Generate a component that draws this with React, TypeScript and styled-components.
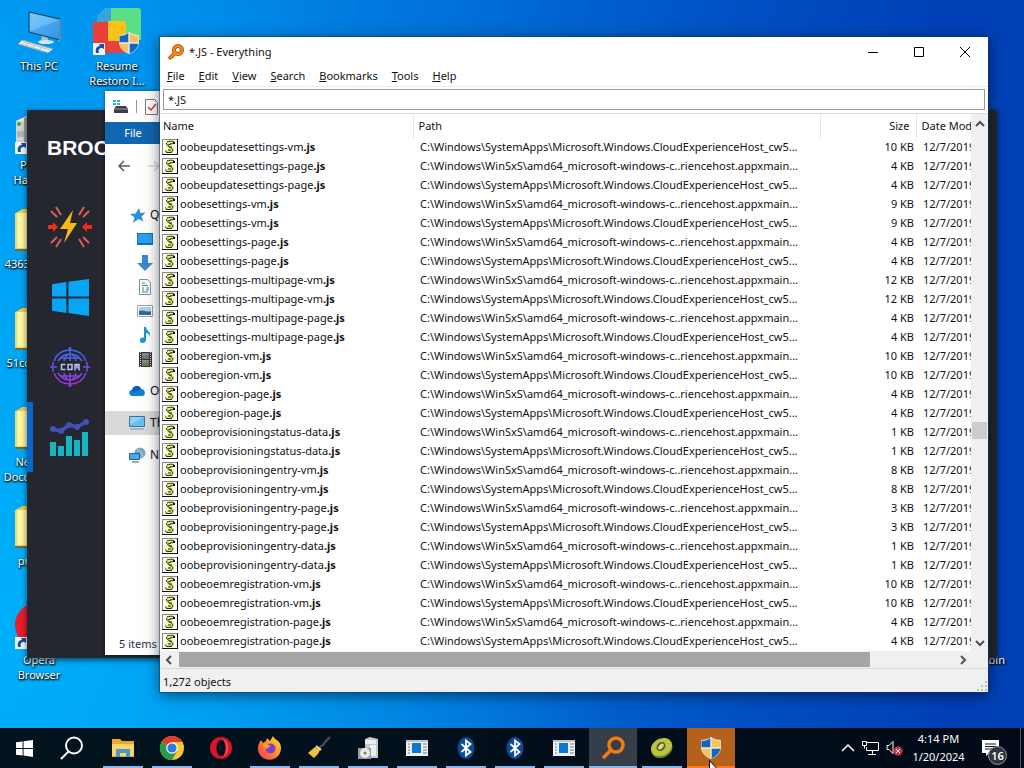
import React from "react";
import styled, { createGlobalStyle } from "styled-components";

const ui = `"Noto Sans", "Open Sans", sans-serif`;

const GlobalStyle = createGlobalStyle`
  *, *::before, *::after { box-sizing: border-box; }
  body { margin: 0; font: 11px/16px ${ui}; color: #111; }
  button, input { font: inherit; color: inherit; border: 0; padding: 0; background: none; }
  ul { list-style: none; margin: 0; padding: 0; }
  svg { display: block; flex: none; }
`;

const Screen = styled.div`
  display: flex;
  flex-direction: column;
  min-height: 100vh;
  overflow: hidden;
`;

const Desktop = styled.main`
  position: relative;
  flex: 1;
  overflow: hidden;
  background:
    radial-gradient(ellipse 60% 100% at 0% 85%, rgba(0, 186, 255, 0.7), rgba(0, 186, 255, 0) 100%),
    linear-gradient(90deg, #0096f0 0%, #008ae8 20%, #0070d8 45%, #0052c4 70%, #0040b6 92%);
`;

const IconGrid = styled.ul`
  display: grid;
  grid-auto-flow: column;
  grid-template-rows: repeat(7, 99px);
  grid-auto-columns: 78px;
`;

const Shortcut = styled.li`
  display: flex;
  flex-direction: column;
  align-items: center;
  padding-top: 7px;
  gap: 3px;
  line-height: 15px;
  color: #fff;
  text-align: center;
  white-space: pre-line;
  text-shadow: 1px 1px 2px #000, 0 1px 2px #000;
`;

const BinLabel = styled.span`
  position: absolute;
  right: 19px;
  bottom: 61px;
  line-height: 15px;
  color: #fff;
  text-shadow: 1px 1px 2px #000, 0 1px 2px #000;
`;

const DarkWindow = styled.section`
  position: absolute;
  left: 27px;
  right: 27px;
  top: 110px;
  bottom: 70px;
  background: #242630;
  box-shadow: 0 2px 6px rgba(0, 0, 0, 0.6);
`;

const Brand = styled.h1`
  margin: 0;
  padding: 25px 0 0 20px;
  font: bold 21px/26px "Liberation Sans", Arial, sans-serif;
  color: #fff;
`;

const DarkNav = styled.nav`
  display: flex;
  flex-direction: column;
  align-items: flex-start;
  padding-top: 31px;
`;

const DarkItem = styled.button<{ $active?: boolean }>`
  display: flex;
  align-items: center;
  justify-content: center;
  width: 78px;
  height: 70px;
  padding-left: ${(p) => (p.$active ? 2 : 8)}px;
  border-left: ${(p) => (p.$active ? "6px solid #0a66cf" : "0")};
`;

const Explorer = styled.section`
  position: absolute;
  left: 105px;
  right: 45px;
  top: 91px;
  bottom: 73px;
  display: flex;
  flex-direction: column;
  align-items: flex-start;
  background: #fff;
  box-shadow: 0 0 3px rgba(0, 0, 0, 0.5);
`;

const QuickBar = styled.header`
  display: flex;
  align-items: center;
  gap: 8px;
  height: 31px;
  padding-left: 8px;
`;

const Separator = styled.span`
  width: 1px;
  height: 13px;
  background: #999;
`;

const FileTab = styled.button`
  width: 56px;
  height: 22px;
  background: #1166b0;
  color: #fff;
`;

const NavArrows = styled.div`
  display: flex;
  gap: 16px;
  padding: 14px 12px 0;
`;

const Tree = styled.ul`
  flex: 1;
  width: 55px;
  padding-top: 29px;
  overflow: hidden;
  white-space: nowrap;
`;

const TreeItem = styled.li<{ $sub?: boolean; $gap?: boolean; $selected?: boolean }>`
  display: flex;
  align-items: center;
  gap: 4px;
  height: 24px;
  margin-top: ${(p) => (p.$gap ? 8 : 0)}px;
  padding-left: ${(p) => (p.$sub ? 32 : 24)}px;
  background: ${(p) => (p.$selected ? "#d9d9d9" : "transparent")};
  font-size: 12px;
`;

const ExplorerStatus = styled.footer`
  padding: 0 14px 3px;
  color: #26344f;
`;

const Window = styled.section`
  position: absolute;
  left: 160px;
  right: 36px;
  top: 37px;
  display: flex;
  flex-direction: column;
  background: #fff;
  box-shadow: 0 0 0 1px rgba(20, 60, 100, 0.5), 0 3px 14px rgba(0, 0, 0, 0.55);
`;

const TitleBar = styled.header`
  display: flex;
  align-items: center;
  height: 29px;
  padding-left: 8px;
  gap: 5px;
`;

const Title = styled.h2`
  flex: 1;
  margin: 0;
  font: inherit;
`;

const Captions = styled.div`
  display: flex;
`;

const Caption = styled.button`
  display: grid;
  place-items: center;
  width: 46px;
  height: 29px;
`;

const MenuBar = styled.nav`
  display: flex;
  height: 21px;
  padding-left: 7px;
  gap: 14px;
  border-bottom: 1px solid #ececec;
`;

const MenuItem = styled.button`
  line-height: 20px;
  &::first-letter { text-decoration: underline; }
`;

const SearchRow = styled.div`
  padding: 2px 3px 3px;
  border-bottom: 1px solid #dcdcdc;
`;

const SearchBox = styled.input`
  display: block;
  width: 100%;
  height: 21px;
  padding: 0 4px;
  border: 1px solid #9a9a9a;
  background: #fff;
`;

const ListArea = styled.div`
  display: grid;
  grid-template-columns: minmax(0, 1fr) 17px;
`;

const FileTable = styled.table`
  width: 100%;
  table-layout: fixed;
  border-collapse: collapse;
  line-height: 17px;
`;

const NameCol = styled.col`
  width: 253px;
`;

const SizeCol = styled.col`
  width: 96px;
`;

const DateCol = styled.col`
  width: 55px;
`;

const Head = styled.th<{ $right?: boolean }>`
  height: 24px;
  padding: 0 6px 2px ${(p) => (p.$right ? 0 : 5)}px;
  border-right: 1px solid #e5e5e5;
  font-weight: 400;
  text-align: ${(p) => (p.$right ? "right" : "left")};
  white-space: nowrap;
  overflow: hidden;
  &:first-child { padding-left: 3px; }
  &:last-child { border-right: 0; padding-right: 0; }
`;

const Cell = styled.td<{ $right?: boolean }>`
  height: 19px;
  padding: 0 2px 2px ${(p) => (p.$right ? 0 : 7)}px;
  text-align: ${(p) => (p.$right ? "right" : "left")};
  white-space: nowrap;
  overflow: hidden;
  &:first-child { padding-left: 2px; }
  &:last-child { padding-right: 0; }
`;

const FileName = styled.span`
  display: flex;
  align-items: flex-end;
  gap: 2px;
`;

const VScroll = styled.div`
  display: grid;
  grid-template-rows: 20px 290fr 17px 198fr 16px;
  justify-items: center;
  align-items: center;
  background: #f0f0f0;
`;

const VThumb = styled.div`
  grid-row: 3;
  width: 15px;
  height: 17px;
  background: #cdcdcd;
`;

const HScroll = styled.div`
  display: grid;
  grid-template-columns: 19px 691fr 85fr 16px 17px;
  align-items: center;
  justify-items: center;
  height: 17px;
  background: #f0f0f0;
`;

const HThumb = styled.div`
  width: 100%;
  height: 15px;
  background: #a6a6a6;
`;

const ScrollButton = styled.button`
  display: grid;
  place-items: center;
`;

const StatusBar = styled.footer`
  display: flex;
  justify-content: space-between;
  align-items: flex-end;
  height: 24px;
  padding: 0 1px 1px 3px;
  border-top: 1px solid #dadada;
  background: #f0f0f0;
  line-height: 18px;
`;

const Taskbar = styled.footer`
  display: flex;
  height: 40px;
  background: linear-gradient(90deg, #02141e, #020a18);
  color: #fff;
`;

const SystemButtons = styled.div`
  display: flex;
  margin-right: 3px;
`;

const TaskButtons = styled.div`
  display: flex;
  gap: 1px;
`;

const TaskButton = styled.button<{ $tone?: "active" | "alert"; $open?: boolean }>`
  display: grid;
  place-items: center;
  position: relative;
  width: 48px;
  background: ${(p) => (p.$tone === "active" ? "#363f49" : p.$tone === "alert" ? "#b5611b" : "transparent")};
  &::after {
    content: "";
    position: absolute;
    bottom: 0;
    height: 2px;
    width: ${(p) => (p.$tone ? 48 : 40)}px;
    background: ${(p) => (p.$tone === "alert" ? "#ff7a1c" : p.$open ? "#86b9ea" : "transparent")};
  }
`;

const Tray = styled.div`
  display: flex;
  align-items: center;
  margin-left: auto;
  gap: 7px;
  padding-right: 3px;
`;

const Clock = styled.time`
  width: 57px;
  line-height: 18px;
  text-align: center;
`;

const Notices = styled.button`
  position: relative;
  width: 28px;
  height: 18px;
  margin-left: 8px;
`;

const Badge = styled.span`
  position: absolute;
  left: 6px;
  top: 7px;
  width: 19px;
  height: 19px;
  border: 1px solid #8a9097;
  border-radius: 50%;
  background: #30363e;
  font-weight: 600;
  line-height: 17px;
  text-align: center;
`;

const Peek = styled.span`
  width: 1px;
  height: 40px;
  margin-left: 3px;
  background: #4a525c;
`;

const Pointer = styled.svg`
  position: absolute;
  left: 22px;
  top: 32px;
  z-index: 1;
`;

const ShieldIcon = ({ size }: { size: number }) => (
  <svg width={size} height={size} viewBox="0 0 22 22">
    <path d="M11 0C8 2 5 3 1 3v7c0 6 5 10 10 12 5-2 10-6 10-12V3c-4 0-7-1-10-3z" fill="#e8edf2" />
    <path d="M10.300 1C8 3 5 3.800 1.500 3.800V10.300h8.800z" fill="#1565bb" />
    <path d="M11.700 1C14 3 17 3.800 20.500 3.800V10.300h-8.800z" fill="#f9c15c" />
    <path d="M1.700 11.700c.7 4.500 4.500 7.800 8.600 9.600v-9.600z" fill="#f9c15c" />
    <path d="M20.300 11.700c-.7 4.500-4.500 7.800-8.600 9.600v-9.600z" fill="#1565bb" />
  </svg>
);

const ShortcutArrow = () => (
  <g>
    <path d="M0 36h12v12H0z" fill="#f4f7fa" />
    <path d="M3 46c-1-5 1-7 4-7l-1-2h5v5l-2-1c-3 0-4 2-3 5z" fill="#1c4f9f" />
  </g>
);

const PcIcon = () => (
  <svg width="48" height="48" viewBox="0 0 48 48">
    <defs>
      <linearGradient id="pcScreen" x1="0" y1="0" x2="1" y2="1">
        <stop offset="0" stopColor="#64bdf6" />
        <stop offset="1" stopColor="#2c93e6" />
      </linearGradient>
    </defs>
    <path d="M14 5l31 7v21l-31-8z" fill="url(#pcScreen)" stroke="#183a5c" strokeWidth="1" />
    <path d="M15 6l29 7-29 11z" fill="#8fd1fa" opacity=".45" />
    <path d="M45 12v21l-2 .5" stroke="#9ac" fill="none" />
    <path d="M27 29l6 2v3h-7z" fill="#a9bcc9" />
    <ellipse cx="31" cy="35" rx="8" ry="2" fill="#dae5ec" />
    <path d="M7 33l31 9-5 4-30-9z" fill="#eff4f7" stroke="#8ea4b2" />
    <path d="M8 35l27 8M6 37l26 8M14 35l-4 4M21 37l-4 4M28 39l-4 4" stroke="#adbdc8" />
  </svg>
);

const RestoroIcon = () => (
  <svg width="48" height="48" viewBox="0 0 48 48">
    <path d="M4 9l9-8h32q3 0 3 3v29H4z" fill="#5adf86" />
    <path d="M4 9l9-8h5v14H4z" fill="#38a4dd" />
    <path d="M0 15h17v31H4q-4 0-4-4z" fill="#ea3f39" />
    <path d="M15 14h15q3 0 3 3v17H15z" fill="#fcc21b" />
    <path d="M15 34h16v12H15z" fill="#e8423d" />
    <ShortcutArrow />
    <g transform="translate(25 25)"><ShieldIcon size={22} /></g>
  </svg>
);

const PcToolIcon = () => (
  <svg width="48" height="48" viewBox="0 0 48 48">
    <path d="M1 15l11-5h20v36H1z" fill="#d4d4d4" />
    <path d="M1 15l11-5v5z" fill="#eee" />
    <path d="M9 12l3-1v34H9z" fill="#999" />
    <circle cx="4" cy="18" r="2" fill="#4ba52d" />
    <path d="M2 25h7v6H2z" fill="#b4b4b4" />
    <ShortcutArrow />
  </svg>
);

const FolderIcon = () => (
  <svg width="48" height="48" viewBox="0 0 48 48">
    <path d="M1 8l7-4h18v41H1z" fill="#fdf6a2" />
    <path d="M1 8l7-4h16v4z" fill="#f2c849" />
    <path d="M1 8v36h15" fill="none" stroke="#e9d680" strokeWidth="2" />
    <path d="M0 44h26v2H0z" fill="#7c6b2a" />
  </svg>
);

const OperaDesktopIcon = () => (
  <svg width="48" height="48" viewBox="0 0 48 48">
    <ellipse cx="24" cy="24" rx="24" ry="23" fill="#e81c2b" />
    <ellipse cx="24" cy="24" rx="10" ry="17" fill="#fff" />
    <ShortcutArrow />
  </svg>
);

const KeyIcon = () => (
  <svg width="16" height="16" viewBox="0 0 24 24" fill="none" strokeLinecap="round">
    <circle cx="15" cy="9" r="6" stroke="#a84a08" strokeWidth="6" />
    <path d="M10 14L3.500 20.500" stroke="#a84a08" strokeWidth="6" />
    <circle cx="15" cy="9" r="6" stroke="#f58a1c" strokeWidth="3.500" />
    <path d="M10 14L3.500 20.500" stroke="#f58a1c" strokeWidth="3.500" />
  </svg>
);

const ScriptIcon = () => (
  <svg width="16" height="16" viewBox="0 0 16 16" shapeRendering="crispEdges">
    <path d="M0 0h16v16H0z" fill="#8c8c80" />
    <path d="M1 1h14v14H1z" fill="#fbfbf3" />
    <path d="M15 0h1v16H0v-1h15z" fill="#111" />
    <g shapeRendering="auto">
      <path d="M5 2h7l1 2-3 1-1 2 3 2v3l-2 2H4l-1-2 2-1 2-1-2-2-1-3z" fill="#e3ea7c" />
      <path d="M5 3c2-1 5-1 7-.500M12.500 3l-2 2-2-.500M4.500 4c0 3 4 4 6 6 1 2-1 3.500-3 3.500M3.500 11.500l1 2h5M6 6l3-1M7 8l3 0M6 11h3" fill="none" stroke="#242c12" strokeWidth="1" />
      <path d="M11 3h2v2h-2z" fill="#111" />
    </g>
  </svg>
);

const BoltIcon = () => (
  <svg width="44" height="42" viewBox="0 0 44 42">
    <path d="M25 4L12 23h8l-4 14 13-20h-7z" fill="#fdb813" />
    <path d="M0 19h5v-3l5 5-5 5v-3H0zM44 19h-5v-3l-5 5 5 5v-3h5z" fill="#f02d12" />
    <path d="M8 1l5 8M3 5l6 6M36 1l-5 8M41 5l-6 6M8 41l5-8M3 37l6-6M36 41l-5-8M41 37l-6-6" stroke="#dc5f57" strokeWidth="2" />
  </svg>
);

const FlagIcon = ({ size, color }: { size: number; color: string }) => (
  <svg width={size} height={size} viewBox="0 0 36 36" fill={color}>
    <path d="M0 5l14-2v14H0zM16 2.600L36 0v17H16zM0 19h14v14L0 31zM16 19h20v17l-20-3z" />
  </svg>
);

const ComIcon = () => (
  <svg width="40" height="40" viewBox="0 0 40 40" fill="none">
    <defs>
      <linearGradient id="com" x2="0" y2="1">
        <stop stopColor="#3d6bea" />
        <stop offset="1" stopColor="#9a35d8" />
      </linearGradient>
    </defs>
    <g stroke="url(#com)" strokeWidth="1.500">
      <path d="M4 14C7 6 13 3 20 3s13 3 16 11M4 26c3 8 9 11 16 11s13-3 16-11" />
      <path d="M8 14c3-5 7-7 12-7s9 2 12 7M8 26c3 5 7 7 12 7s9-2 12-7M14 14c1-4 3-7 6-7s5 3 6 7M14 26c1 4 3 7 6 7s5-3 6-7" />
      <path d="M20.010 0v14M20 26v14M0 20.010h7M33 20h7M3 15v10M37 15v10M10 11h20M10 29h20" />
    </g>
    <circle cx="20" cy="1.500" r="1.500" fill="#3d6bea" />
    <circle cx="20" cy="38.500" r="1.500" fill="#9a35d8" />
    <path d="M15.500 17.500h-4v5h4M18 17.500h4v5h-4zM25 23.500v-6h4v6M27 17.500v4" stroke="#b9c2f5" strokeWidth="1.500" />
  </svg>
);

const ChartIcon = () => (
  <svg width="40" height="37" viewBox="0 3 40 37">
    <path d="M0 26h6v14H0zM8 30h6v10H8zM16 20h6v20h-6zM24 24h6v16h-6zM32 16h6v24h-6z" fill="#1ab4bf" />
    <path d="M2 13l9 2 8-6 8 2 9-5" fill="none" stroke="#4351b5" strokeWidth="3.500" />
    <g fill="#4351b5"><circle cx="3" cy="13" r="3" /><circle cx="11" cy="15" r="3" /><circle cx="19" cy="9" r="3" /><circle cx="27" cy="11" r="3" /><circle cx="36" cy="6" r="3" /></g>
  </svg>
);

const treeArt: Record<string, React.ReactNode> = {
  star: <path d="M10 1l1.500 5 5-.5-4 4 2 5L9.500 12 4 16l1.500-5.500L1 7l5.500-.5z" fill="#2f8fdc" />,
  desktop: <><path d="M0 2h16v12H0z" fill="#1773bd" /><path d="M1 3h14v9H1z" fill="#29a0ee" /></>,
  down: <path d="M5 0h6v8h5l-8 8-8-8h5z" fill="#3c87d2" />,
  doc: <><path d="M2.500.5h8l3 3v12h-11z" fill="#fff" stroke="#848e96" /><path d="M5 4h3M5 6.500h6M5 9h2M9 9h3M5 11h2M9 11h3M5 13h6" stroke="#3b85ab" /></>,
  picture: <><path d="M.5 2.500h15v11H.5z" fill="#fff" stroke="#9ba3a9" /><path d="M2 4h12v8H2z" fill="#a8d3ef" /><path d="M2 8c5-2 7 2 12 0v4H2z" fill="#3c6785" /></>,
  music: <path d="M7 0h2c0 4 5 4 4 9-1-2-2-3-4-3v7c0 4-7 4-6 0 0-2 2-3 4-2z" fill="#1c92e0" />,
  film: <><path d="M2 1h13v15H2z" fill="#333" /><path d="M5 2h7v6H5zM5 9h7v6H5z" fill="#7589c2" /><path d="M5 5l7-1v4H5zM5 12l7-1v4H5z" fill="#75803b" /><path d="M3.500 1v15M13.500 1v15" stroke="#ddd" strokeDasharray="1 1" /></>,
  cloud: <><path d="M4 13c-5 0-5-6-1-6 1-5 8-5 9-1 5 0 5 7 1 7z" fill="#1280d8" /><path d="M3 7c1-5 8-5 9-1L5 9z" fill="#0a5eb4" /></>,
  pc: <><path d="M.5 1.500h15v10H.5z" fill="#67bef3" stroke="#3b7296" /><path d="M1 2h14L1 10z" fill="#8dd0f6" /><path d="M1 14h14" stroke="#7297ad" /></>,
  network: <><circle cx="11" cy="6" r="5.500" fill="#79a9c7" /><path d="M8 2c3 2 5 5 6 8" stroke="#b8d5e6" fill="none" /><path d="M.5 6.500h10v6H.5z" fill="#4aa9ea" stroke="#236394" /><path d="M3 15h7" stroke="#557" /></>,
};

const TreeIcon = ({ name }: { name: string }) => (
  <svg width="17" height="17" viewBox="0 0 17 17">{treeArt[name]}</svg>
);

const Chevron = ({ d }: { d: string }) => (
  <svg width="10" height="10" viewBox="0 0 10 10" fill="none" stroke="#505050" strokeWidth="2"><path d={d} /></svg>
);

const WinIcon = () => (
  <svg width="22" height="16" viewBox="0 0 22 16">
    <path d="M0 0h22v16H0z" fill="#eef2f4" /><path d="M6 3h9v10H6z" fill="#0c78d4" />
    <path d="M2 4h2M2 7h2M2 10h2M2 13h2M17 4h4M17 7h4M17 10h4M17 13h4" stroke="#6f7c85" /><path d="M0 1h22" stroke="#8c989f" />
  </svg>
);

const BluetoothIcon = () => (
  <svg width="18" height="22" viewBox="0 0 18 22">
    <ellipse cx="9" cy="11" rx="8.500" ry="11" fill="#0a4c94" />
    <path d="M4.500 7l9 8L9 18.500v-15L13.500 7l-9 8" fill="none" stroke="#fff" strokeWidth="1.800" />
  </svg>
);

const taskArt: Record<string, React.ReactNode> = {
  search: <svg width="24" height="24" viewBox="0 0 24 24" fill="none" stroke="#fff" strokeWidth="2"><circle cx="14" cy="9.500" r="8" /><path d="M8.500 15.500L1 23" /></svg>,
  folder: <svg width="22" height="20" viewBox="0 0 22 20"><path d="M0 1h8l2 2h12v16H0z" fill="#e9a832" /><path d="M0 6h22v12H0z" fill="#fbd667" /><path d="M4 11h14v8h-4v-4H8v4H4z" fill="#4797cf" /></svg>,
  chrome: <svg width="24" height="24" viewBox="0 0 24 24"><circle cx="12" cy="12" r="12" fill="#fbc82e" /><path d="M12 12L1.600 6A12 12 0 0 1 22.400 6H12z" fill="#e23b2e" /><path d="M12 12L1.600 6A12 12 0 0 0 12 24l5-9z" fill="#289b4b" /><circle cx="12" cy="12" r="5.800" fill="#fff" /><circle cx="12" cy="12" r="4.600" fill="#3177e0" /></svg>,
  opera: <svg width="22" height="22" viewBox="0 0 22 22"><path fillRule="evenodd" d="M11 0a11 11 0 1 0 0 22 11 11 0 1 0 0-22zM11 3c3 0 4.500 3.500 4.500 8S14 19 11 19s-4.500-3.500-4.500-8S8 3 11 3z" fill="#d9142c" /><path d="M13 2.500c7 0 7 17 0 17 4-3 4-14 0-17z" fill="#ff4454" /></svg>,
  firefox: <svg width="24" height="24" viewBox="0 0 24 24"><defs><linearGradient id="fox" x1="1" y1="0" x2="0" y2="1"><stop stopColor="#ffe43b" /><stop offset=".5" stopColor="#ff8b23" /><stop offset="1" stopColor="#ef3070" /></linearGradient></defs><path d="M3 4l2 3 3-2 1-3 3 3 3-5c1 4 8 4 8 12 0 15-22 16-23 1 0-4 1-6 3-9z" fill="url(#fox)" /><circle cx="12.500" cy="12.500" r="5" fill="#7a3fd0" /><path d="M5 9c4-2 6 0 8 1-3 1-3 3-5 3z" fill="#ff9b2a" /></svg>,
  broom: <svg width="24" height="24" viewBox="0 0 24 24"><path d="M23 1l-5 5-1 2-5 4" fill="none" stroke="#4d5155" strokeWidth="2" /><path d="M8 11l5 3-2 4-4 4-6-5z" fill="#f4bf45" /><path d="M9 10l5 4" stroke="#f5df8b" strokeWidth="2" /></svg>,
  installer: <svg width="22" height="24" viewBox="0 0 22 24"><path d="M8 3l5-2 8 2v19H8z" fill="#c6c8ca" /><path d="M8 4h11v4H8zM13 9h6v11h-6z" fill="#edeeef" /><path d="M1 12h13v11H1z" fill="#9b9da1" /><circle cx="8" cy="17" r="5" fill="#e9e9ea" /><circle cx="8" cy="17" r="1.500" fill="#777" /></svg>,
  window: <WinIcon />,
  bluetooth: <BluetoothIcon />,
  key: <svg width="24" height="24" viewBox="0 0 24 24" fill="none" stroke="#f47a14" strokeWidth="3.500"><circle cx="15" cy="9" r="7" /><path d="M10 14l-8 8" /></svg>,
  kiwi: <svg width="24" height="22" viewBox="0 0 24 22"><ellipse cx="12" cy="12" rx="11" ry="8.500" transform="rotate(-28 12 12)" fill="#77801f" /><ellipse cx="11.500" cy="10" rx="11" ry="8.500" transform="rotate(-28 11.500 10)" fill="#b9c443" /><ellipse cx="11" cy="9.500" rx="5" ry="4" transform="rotate(-50 11 9.500)" fill="#565c22" /><ellipse cx="11" cy="9.500" rx="3.500" ry="2" transform="rotate(-50 11 9.500)" fill="#dbe08a" /></svg>,
  shield: <ShieldIcon size={22} />,
};

const tasks: { label: string; art: string; open?: boolean; tone?: "active" | "alert" }[] = [
  { label: "File Explorer", art: "folder", open: true },
  { label: "Chrome", art: "chrome", open: true },
  { label: "Opera", art: "opera" },
  { label: "Firefox", art: "firefox", open: true },
  { label: "Cleaner", art: "broom", open: true },
  { label: "Installer", art: "installer", open: true },
  { label: "Application", art: "window", open: true },
  { label: "Bluetooth", art: "bluetooth", open: true },
  { label: "Bluetooth", art: "bluetooth", open: true },
  { label: "Application", art: "window", open: true },
  { label: "Everything", art: "key", open: true, tone: "active" },
  { label: "Kiwi", art: "kiwi", open: true },
  { label: "User Account Control", art: "shield", tone: "alert" },
];

const shortcuts: [string, React.ReactNode][] = [
  ["This PC", <PcIcon />],
  ["PC Tool\nHardware", <PcToolIcon />],
  ["4363746ab3c", <FolderIcon />],
  ["51cc80d9e2f", <FolderIcon />],
  ["New Text\nDocument.txt", <FolderIcon />],
  ["project1", <FolderIcon />],
  ["Opera\nBrowser", <OperaDesktopIcon />],
  ["Resume\nRestoro I...", <RestoroIcon />],
];

const tree: { name: string; art: string; label?: string; sub?: boolean; gap?: boolean; selected?: boolean }[] = [
  { name: "Quick access", art: "star", label: "Q" },
  { name: "Desktop", art: "desktop", sub: true },
  { name: "Downloads", art: "down", sub: true },
  { name: "Documents", art: "doc", sub: true },
  { name: "Pictures", art: "picture", sub: true },
  { name: "Music", art: "music", sub: true },
  { name: "Videos", art: "film", sub: true },
  { name: "OneDrive", art: "cloud", label: "O", gap: true },
  { name: "This PC", art: "pc", label: "Th", gap: true, selected: true },
  { name: "Network", art: "network", label: "N", gap: true },
];

const files: [string, number][] = [
  ["updatesettings-vm", 10], ["updatesettings-page", 4], ["updatesettings-page", 4],
  ["settings-vm", 9], ["settings-vm", 9], ["settings-page", 4], ["settings-page", 4],
  ["settings-multipage-vm", 12], ["settings-multipage-vm", 12],
  ["settings-multipage-page", 4], ["settings-multipage-page", 4],
  ["region-vm", 10], ["region-vm", 10], ["region-page", 4], ["region-page", 4],
  ["provisioningstatus-data", 1], ["provisioningstatus-data", 1],
  ["provisioningentry-vm", 8], ["provisioningentry-vm", 8],
  ["provisioningentry-page", 3], ["provisioningentry-page", 3],
  ["provisioningentry-data", 1], ["provisioningentry-data", 1],
  ["oemregistration-vm", 10], ["oemregistration-vm", 10],
  ["oemregistration-page", 4], ["oemregistration-page", 4],
];

const paths = [
  "C:\\Windows\\SystemApps\\Microsoft.Windows.CloudExperienceHost_cw5...",
  "C:\\Windows\\WinSxS\\amd64_microsoft-windows-c..riencehost.appxmain...",
];

export default function App() {
  return (
    <Screen>
      <GlobalStyle />
      <Desktop>
        <IconGrid>
          {shortcuts.map(([label, icon]) => (
            <Shortcut key={label}>{icon}{label}</Shortcut>
          ))}
        </IconGrid>
        <BinLabel>bin</BinLabel>

        <DarkWindow>
          <Brand>BROO</Brand>
          <DarkNav>
            <DarkItem aria-label="Boost"><BoltIcon /></DarkItem>
            <DarkItem aria-label="Windows"><FlagIcon size={37} color="#06a6f5" /></DarkItem>
            <DarkItem aria-label="COM"><ComIcon /></DarkItem>
            <DarkItem aria-label="Statistics" $active><ChartIcon /></DarkItem>
          </DarkNav>
        </DarkWindow>

        <Explorer>
          <QuickBar>
            <svg width="15" height="14" viewBox="0 0 15 14">
              <path d="M0 0h3v2H0zM4 0h3v2H4zM0 3h3v2H0zM4 3h3v2H4z" fill="#25b5d6" />
              <path d="M3 6h10l2 3v4H1V9z" fill="#3b3f44" /><path d="M1 9h14" stroke="#999" />
            </svg>
            <Separator />
            <svg width="13" height="16" viewBox="0 0 13 16" fill="none">
              <path d="M.5.5h9l3 3v12H.5z" stroke="#777" /><path d="M3 8l3 3 5-6" stroke="#d13b32" strokeWidth="1.500" />
            </svg>
          </QuickBar>
          <FileTab>File</FileTab>
          <NavArrows>
            <svg width="14" height="16" viewBox="0 0 14 16" fill="none" stroke="#5c5c5c" strokeWidth="1.500"><path d="M13 8H2M7 3L2 8l5 5" /></svg>
            <svg width="14" height="16" viewBox="0 0 14 16" fill="none" stroke="#d5d5d5" strokeWidth="1.500"><path d="M1 8h11M7 3l5 5-5 5" /></svg>
          </NavArrows>
          <Tree>
            {tree.map((t) => (
              <TreeItem key={t.name} aria-label={t.name} $sub={t.sub} $gap={t.gap} $selected={t.selected}>
                <TreeIcon name={t.art} />{t.label}
              </TreeItem>
            ))}
          </Tree>
          <ExplorerStatus>5 items</ExplorerStatus>
        </Explorer>

        <Window>
          <TitleBar>
            <KeyIcon />
            <Title>*.JS - Everything</Title>
            <Captions>
              <Caption aria-label="Minimize"><svg width="10" height="10" viewBox="0 0 10 10" stroke="#000"><path d="M0 5.500h10" /></svg></Caption>
              <Caption aria-label="Maximize"><svg width="10" height="10" viewBox="0 0 10 10" stroke="#000" fill="none"><path d="M.5.5h9v9h-9z" /></svg></Caption>
              <Caption aria-label="Close"><svg width="10" height="10" viewBox="0 0 10 10" stroke="#000"><path d="M0 0l10 10M10 0L0 10" /></svg></Caption>
            </Captions>
          </TitleBar>
          <MenuBar>
            {["File", "Edit", "View", "Search", "Bookmarks", "Tools", "Help"].map((m) => (
              <MenuItem key={m}>{m}</MenuItem>
            ))}
          </MenuBar>
          <SearchRow><SearchBox aria-label="Search" defaultValue="*.JS" /></SearchRow>
          <ListArea>
            <FileTable>
              <colgroup><NameCol /><col /><SizeCol /><DateCol /></colgroup>
              <thead>
                <tr><Head>Name</Head><Head>Path</Head><Head $right>Size</Head><Head>Date Modified</Head></tr>
              </thead>
              <tbody>
                {files.map(([name, size], i) => (
                  <tr key={i}>
                    <Cell><FileName><ScriptIcon /><span>oobe{name}<b>.js</b></span></FileName></Cell>
                    <Cell>{paths[i % 2]}</Cell>
                    <Cell $right>{size} KB</Cell>
                    <Cell>12/7/2019</Cell>
                  </tr>
                ))}
              </tbody>
            </FileTable>
            <VScroll>
              <ScrollButton aria-label="Scroll up"><Chevron d="M1 7l4-4 4 4" /></ScrollButton>
              <div />
              <VThumb />
              <div />
              <ScrollButton aria-label="Scroll down"><Chevron d="M1 3l4 4 4-4" /></ScrollButton>
            </VScroll>
          </ListArea>
          <HScroll>
            <ScrollButton aria-label="Scroll left"><Chevron d="M6 1L2 5l4 4" /></ScrollButton>
            <HThumb />
            <div />
            <ScrollButton aria-label="Scroll right"><Chevron d="M3 1l4 4-4 4" /></ScrollButton>
          </HScroll>
          <StatusBar>
            1,272 objects
            <svg width="10" height="10" viewBox="0 0 10 10" fill="#bdbdbd">
              <path d="M8 0h2v2H8zM4 4h2v2H4zM8 4h2v2H8zM0 8h2v2H0zM4 8h2v2H4zM8 8h2v2H8z" />
            </svg>
          </StatusBar>
        </Window>
      </Desktop>

      <Taskbar>
        <SystemButtons>
          <TaskButton aria-label="Start"><FlagIcon size={17} color="#fff" /></TaskButton>
          <TaskButton aria-label="Search">{taskArt.search}</TaskButton>
        </SystemButtons>
        <TaskButtons>
          {tasks.map((t, i) => (
            <TaskButton key={i} aria-label={t.label} $open={t.open} $tone={t.tone}>
              {taskArt[t.art]}
              {t.tone === "alert" && (
                <Pointer width="12" height="18" viewBox="0 0 12 18"><path d="M.5.5v15l4-4h6z" fill="#fff" stroke="#000" /></Pointer>
              )}
            </TaskButton>
          ))}
        </TaskButtons>
        <Tray>
          <svg width="14" height="14" viewBox="0 0 14 14" fill="none" stroke="#fff" strokeWidth="1.500"><path d="M1 10l6-6 6 6" /></svg>
          <svg width="17" height="16" viewBox="0 0 17 16" fill="none" stroke="#fff"><path d="M5 2.500h11.500v8H4.500V7M10.500 10v4M6 14.500h8M.5 1.500h4v4h-4zM2.500 5.500v3" /></svg>
          <svg width="17" height="16" viewBox="0 0 17 16"><path d="M1 5.500h2l4-4v12l-4-4H1z" fill="none" stroke="#fff" /><circle cx="12" cy="11" r="4.500" fill="#d33340" /><path d="M10 9l4 4M14 9l-4 4" stroke="#fff" /></svg>
          <Clock>4:14 PM<br />1/20/2024</Clock>
          <Notices aria-label="16 notifications">
            <svg width="17" height="16" viewBox="0 0 17 16"><path d="M0 0h17v13H7l-3 3v-3H0z" fill="#fff" /><path d="M3 4h11M3 6.500h11M3 9h11" stroke="#07111b" /></svg>
            <Badge>16</Badge>
          </Notices>
          <Peek />
        </Tray>
      </Taskbar>
    </Screen>
  );
}
